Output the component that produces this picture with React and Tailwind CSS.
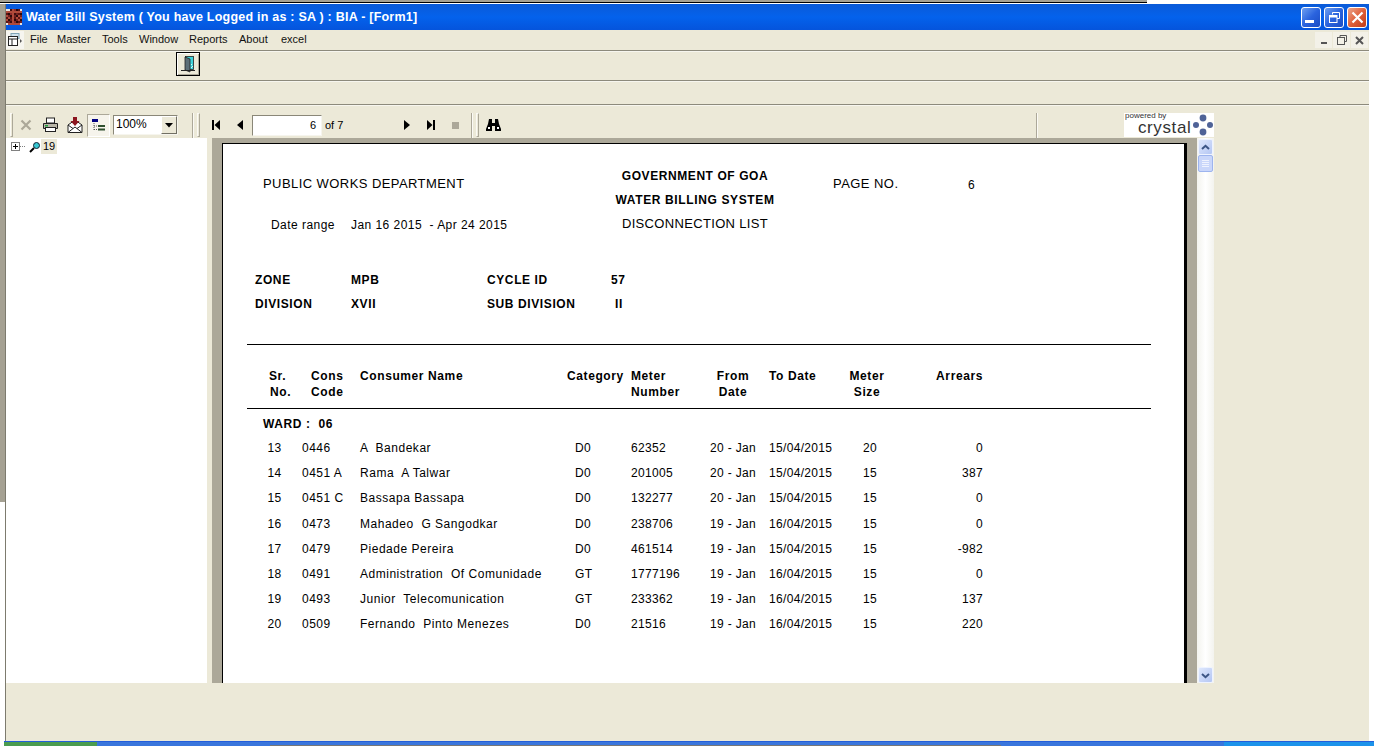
import React from "react";

const rows = [
  ["13", "0446", "A  Bandekar", "D0", "62352", "20 - Jan", "15/04/2015", "20", "0"],
  ["14", "0451 A", "Rama  A Talwar", "D0", "201005", "20 - Jan", "15/04/2015", "15", "387"],
  ["15", "0451 C", "Bassapa Bassapa", "D0", "132277", "20 - Jan", "15/04/2015", "15", "0"],
  ["16", "0473", "Mahadeo  G Sangodkar", "D0", "238706", "19 - Jan", "16/04/2015", "15", "0"],
  ["17", "0479", "Piedade Pereira", "D0", "461514", "19 - Jan", "15/04/2015", "15", "-982"],
  ["18", "0491", "Administration  Of Comunidade", "GT", "1777196", "19 - Jan", "16/04/2015", "15", "0"],
  ["19", "0493", "Junior  Telecomunication", "GT", "233362", "19 - Jan", "16/04/2015", "15", "137"],
  ["20", "0509", "Fernando  Pinto Menezes", "D0", "21516", "19 - Jan", "16/04/2015", "15", "220"],
];

const gridCols = "grid grid-cols-[55px_58px_207px_64px_66px_72px_80px_36px_98px]";

function Divider() {
  return (
    <div className="w-full">
      <div className="h-px bg-[#8d8a7c]" />
      <div className="h-px bg-[#f7f6ef]" />
    </div>
  );
}

function Grip() {
  return <div className="h-[24px] w-[3px] border-l border-t border-b border-r border-l-[#fbfaf5] border-t-[#fbfaf5] border-r-[#aca899] border-b-[#aca899]" />;
}

function VLine() {
  return <div className="h-[25px] w-[2px] border-l border-r border-l-[#aca899] border-r-[#fbfaf5]" />;
}

function Slot({ w, children }) {
  const cls = { 25: "w-[25px]", 24: "w-[24px]" }[w];
  return <div className={`${cls} h-full flex items-center justify-center`}>{children}</div>;
}

function Nav({ d }) {
  return (
    <svg width="12" height="12" viewBox="0 0 12 12">
      <path d={d} fill="#000" />
    </svg>
  );
}

function AppIcon() {
  const cells = [];
  const pal = ["#5c1414", "#2a0a0a", "#8c2a2a", "#b04a3a", "#401010", "#702020"];
  for (let y = 0; y < 8; y++) {
    for (let x = 0; x < 8; x++) {
      const cut = (y === 0 && (x < 2 || x > 6)) || (y === 7 && (x === 0 || x === 7));
      if (cut) continue;
      cells.push(<rect key={`${x}-${y}`} x={x * 2} y={y * 2} width="2" height="2" fill={pal[(x * 5 + y * 3 + x * y) % 6]} />);
    }
  }
  return (
    <svg width="16" height="16" viewBox="0 0 16 16" className="bg-[#e8e4e0] shrink-0">
      {cells}
    </svg>
  );
}

function WinBtn({ children, red }) {
  return (
    <div
      className={`w-[20px] h-[21px] rounded-[3px] border border-white flex items-center justify-center ${
        red ? "bg-gradient-to-br from-[#e9a48b] via-[#e0603a] to-[#c03a18]" : "bg-gradient-to-br from-[#6f9ff0] via-[#2a63de] to-[#1b4cc4]"
      }`}
    >
      {children}
    </div>
  );
}

function MdiBtn({ children }) {
  return <div className="w-[17px] h-[16px] bg-[#f3f1e8] flex items-center justify-center">{children}</div>;
}

function ScrollBtn({ up }) {
  return (
    <div className="w-[15px] h-[16px] mx-auto rounded-[2px] border border-[#eef3ff] bg-gradient-to-br from-[#dfe8fd] to-[#b4c6f3] flex items-center justify-center">
      <svg width="9" height="7" viewBox="0 0 9 7">
        <path d={up ? "M1 5 L4.5 1.8 L8 5" : "M1 2 L4.5 5.2 L8 2"} stroke="#3c5585" strokeWidth="2" fill="none" />
      </svg>
    </div>
  );
}

export default function App() {
  return (
    <div className="w-[1374px] h-[746px] overflow-hidden bg-white flex flex-col font-['Liberation_Sans',Arial,sans-serif] text-black">
      {/* strip above the window */}
      <div className="h-[4px] shrink-0 flex">
        <div className="w-[1147px] h-[3px] bg-[#a5a193] border-b border-black" />
      </div>

      <div className="flex-1 flex min-h-0">
        <div className="w-[5px] h-[498px] bg-[#a5a193] shrink-0" />

        {/* window */}
        <div className="w-[1364px] shrink-0 flex flex-col bg-[#ece9d8] border-l border-[#7d7b6e]">
          {/* title bar */}
          <div className="h-[26px] shrink-0 flex items-center pr-[2px] bg-gradient-to-b from-[#0a5ad8] via-[#0462ec] to-[#0554dc]">
            <AppIcon />
            <span className="ml-[4px] text-[12.5px] font-bold text-white tracking-[0.23px] whitespace-pre">
              Water Bill System ( You have Logged in as : SA ) : BIA - [Form1]
            </span>
            <div className="ml-auto flex gap-[3px]">
              <WinBtn>
                <div className="w-[9px] h-[3px] bg-white mt-[9px] mr-[3px]" />
              </WinBtn>
              <WinBtn>
                <svg width="13" height="13" viewBox="0 0 13 13" fill="none" stroke="#fff">
                  <path d="M4.5 3.5V1.5H11.5V7.5H9" />
                  <rect x="1.5" y="4.5" width="7.5" height="7" />
                  <path d="M1.5 5.5H9" strokeWidth="2" />
                </svg>
              </WinBtn>
              <WinBtn red>
                <svg width="13" height="13" viewBox="0 0 13 13">
                  <path d="M1.5 1.5L11.5 11.5M11.5 1.5L1.5 11.5" stroke="#fff" strokeWidth="2.2" />
                </svg>
              </WinBtn>
            </div>
          </div>

          {/* menu bar */}
          <div className="h-[20px] shrink-0 flex items-center text-[11px] pr-[1px]">
            <div className="w-[18px] h-[18px] bg-[#f6f5ef] flex items-center justify-center shrink-0">
              <svg width="16" height="14" viewBox="0 0 16 14">
                <rect x="4" y="0.5" width="8" height="5" fill="#cfe3ee" stroke="#7fa3b5" />
                <rect x="1.5" y="3.5" width="9" height="9" fill="#fff" stroke="#222" />
                <path d="M1.5 6H10.5M5 6V12.5" stroke="#222" />
                <path d="M13 6l2 2-2 2z" fill="#555" />
              </svg>
            </div>
            <div className="flex ml-[6px] -mt-[2px] whitespace-pre text-[#111]">
              <span className="w-[27px]">File</span>
              <span className="w-[45px]">Master</span>
              <span className="w-[37px]">Tools</span>
              <span className="w-[50px]">Window</span>
              <span className="w-[50px]">Reports</span>
              <span className="w-[42px]">About</span>
              <span>excel</span>
            </div>
            <div className="ml-auto flex gap-[1px]">
              <MdiBtn>
                <div className="w-[6px] h-[2px] bg-[#555] mt-[6px]" />
              </MdiBtn>
              <MdiBtn>
                <svg width="10" height="10" viewBox="0 0 10 10" fill="none" stroke="#555">
                  <path d="M3 2.5V.5H9.5V6.5H7.5" />
                  <rect x=".5" y="2.5" width="7" height="7" />
                </svg>
              </MdiBtn>
              <MdiBtn>
                <svg width="9" height="9" viewBox="0 0 9 9">
                  <path d="M1 1L8 8M8 1L1 8" stroke="#555" strokeWidth="2" />
                </svg>
              </MdiBtn>
            </div>
          </div>

          <Divider />

          {/* toolbar 1 */}
          <div className="h-[28px] shrink-0 flex items-start pl-[170px]">
            <div className="w-[24px] h-[24px] border border-black bg-[#ece9d8] shadow-[inset_1px_1px_0_#fff,inset_-1px_-1px_0_#aca899] flex items-center justify-center">
              <svg width="18" height="18" viewBox="0 0 18 18">
                <rect x="6.5" y="1.5" width="8" height="13" fill="#3fd4dc" stroke="#222" strokeWidth="0.8" />
                <path d="M6 2L11 4V17L6 15Z" fill="#5d6f78" stroke="#222" strokeWidth="0.8" />
                <path d="M2 15.5H16" stroke="#222" />
                <path d="M12 9h1v1h-1zM13 11h1v1h-1zM12 12h1v1h-1z" fill="#d8fbfb" />
              </svg>
            </div>
          </div>

          <Divider />

          <div className="h-[22px] shrink-0" />

          <Divider />

          {/* viewer toolbar */}
          <div className="h-[32px] shrink-0 flex items-center pt-[6px] text-[11px]">
            <div className="ml-[4px]">
              <Grip />
            </div>
            <Slot w={25}>
              <svg width="12" height="12" viewBox="0 0 12 12">
                <path d="M1.5 1.5L10.5 10.5M10.5 1.5L1.5 10.5" stroke="#aca899" strokeWidth="2.2" />
              </svg>
            </Slot>
            <Slot w={25}>
              <svg width="17" height="16" viewBox="0 0 17 16">
                <rect x="4.5" y="1" width="8" height="5" fill="#fff" stroke="#222" />
                <path d="M1.5 6.5H15.5V11.5H1.5Z" fill="#b9b6a8" stroke="#222" />
                <rect x="3.5" y="10.5" width="10" height="4" fill="#fff" stroke="#222" />
                <rect x="3" y="8" width="3" height="1.5" fill="#20a040" />
              </svg>
            </Slot>
            <Slot w={24}>
              <svg width="16" height="17" viewBox="0 0 16 17">
                <path d="M1 8L8 3L15 8V15.5H1Z" fill="#fff" stroke="#222" />
                <path d="M1 15.5L8 10L15 15.5M1 8L6 11.5M15 8L10 11.5" fill="none" stroke="#222" />
                <path d="M6 0H10V4H12.5L8 9L3.5 4H6Z" fill="#8c1620" />
              </svg>
            </Slot>
            <div className="w-[23px] h-[23px] bg-[#f6f4ec] border border-l-[#aca899] border-t-[#aca899] border-r-white border-b-white flex items-center justify-center">
              <svg width="14" height="13" viewBox="0 0 14 13">
                <rect x="0" y="0" width="6" height="3" fill="#000080" />
                <path d="M2 4V12M2 7H5M2 10.5H5" stroke="#555" strokeDasharray="1 1" />
                <rect x="6" y="6" width="7" height="2" fill="#2f4f2f" />
                <rect x="6" y="9.5" width="7" height="2" fill="#2f4f2f" />
              </svg>
            </div>
            <div className="ml-[3px] w-[65px] h-[20px] bg-white border border-l-[#8a8778] border-t-[#8a8778] border-r-[#f6f5ee] border-b-[#f6f5ee] flex">
              <span className="pl-[2px] text-[12px] leading-[17px]">100%</span>
              <div className="ml-auto w-[16px] h-full bg-[#ece9d8] border border-r-[#716f64] border-b-[#716f64] border-l-white border-t-white flex items-center justify-center">
                <svg width="8" height="5" viewBox="0 0 8 5">
                  <path d="M0 0H8L4 4.5Z" fill="#000" />
                </svg>
              </div>
            </div>
            <div className="ml-[14px]">
              <VLine />
            </div>
            <div className="ml-[3px]">
              <Grip />
            </div>
            <div className="ml-[4px] flex h-full">
              <Slot w={24}>
                <Nav d="M2 1H4V11H2ZM10 1V11L4.5 6Z" />
              </Slot>
              <Slot w={24}>
                <Nav d="M9 1V11L3 6Z" />
              </Slot>
            </div>
            <div className="w-[70px] h-[21px] bg-white border border-l-[#8a8778] border-t-[#8a8778] border-r-[#f6f5ee] border-b-[#f6f5ee] flex items-center justify-end pr-[5px] text-[11px]">
              6
            </div>
            <span className="ml-[3px] w-[70px] text-[11px]">of 7</span>
            <div className="flex h-full">
              <Slot w={24}>
                <Nav d="M3 1V11L9 6Z" />
              </Slot>
              <Slot w={24}>
                <Nav d="M2 1L7.5 6L2 11ZM8 1H10V11H8Z" />
              </Slot>
              <Slot w={24}>
                <div className="w-[7px] h-[7px] bg-[#aca899]" />
              </Slot>
            </div>
            <div className="ml-[4px]">
              <VLine />
            </div>
            <div className="ml-[3px]">
              <Grip />
            </div>
            <div className="ml-[2px] h-full">
              <Slot w={24}>
                <svg width="15" height="14" viewBox="0 0 15 14">
                  <path d="M3 1H6V5H9V1H12L13 6L15 11V13H9V8H6V13H0V11L2 6Z" fill="#000" />
                  <rect x="2" y="9" width="2" height="2" fill="#fff" />
                  <rect x="11" y="9" width="2" height="2" fill="#fff" />
                </svg>
              </Slot>
            </div>
            <div className="ml-[531px]">
              <VLine />
            </div>
            <div className="ml-[86px] w-[90px] h-[24px] bg-white relative shrink-0">
              <span className="absolute left-[1px] top-0 text-[8px] leading-[6px] text-[#333]">powered by</span>
              <span className="absolute left-[14px] top-[7px] text-[17px] leading-[15px] tracking-[0.6px] text-[#333]">crystal</span>
              <svg width="22" height="22" viewBox="0 0 22 22" className="absolute right-0 top-[1px]">
                <circle cx="11" cy="4" r="3.4" fill="#4f6397" />
                <circle cx="4" cy="11" r="3" fill="#4f6397" />
                <circle cx="18" cy="11" r="3" fill="#4f6397" />
                <circle cx="11" cy="18" r="3.4" fill="#4f6397" />
              </svg>
            </div>
          </div>

          {/* viewer body */}
          <div className="h-[545px] shrink-0 flex">
            {/* tree */}
            <div className="w-[201px] shrink-0 bg-white pl-[5px] pt-[1px]">
              <div className="h-[15px] flex items-center">
                <div className="w-[9px] h-[9px] border border-[#808080] flex items-center justify-center">
                  <svg width="7" height="7" viewBox="0 0 7 7">
                    <path d="M1 3.5H6M3.5 1V6" stroke="#000" />
                  </svg>
                </div>
                <div className="w-[5px] border-t border-dotted border-[#808080]" />
                <svg width="12" height="12" viewBox="0 0 12 12" className="ml-[4px]">
                  <circle cx="7.5" cy="4.5" r="3" fill="#35c6d0" stroke="#123" />
                  <path d="M5 7L1 11" stroke="#000" strokeWidth="2" />
                </svg>
                <span className="w-[16px] h-[15px] bg-[#ece9d8] text-[11px] leading-[15px] text-center">19</span>
              </div>
            </div>

            <div className="w-[5px] shrink-0" />

            {/* page area */}
            <div className="w-[985px] shrink-0 bg-[#aca899] pl-[10px] pt-[5px] overflow-hidden">
              <div className="w-[965px] h-[560px] bg-white border-l border-t border-black border-r-[3px] text-[12px] tracking-[0.33px] whitespace-pre">
                {/* heading */}
                <div className="h-[73px] pt-[20px] grid grid-cols-[392px_220px_135px_auto]">
                  <div className="pl-[40px] pt-[13px] flex flex-col">
                    <span className="h-[39px] text-[13px] leading-[14px] tracking-[0.43px]">PUBLIC WORKS DEPARTMENT</span>
                    <div className="pl-[8px] flex tracking-[0.45px]">
                      <span className="w-[80px]">Date range</span>
                      <span>Jan 16 2015  - Apr 24 2015</span>
                    </div>
                  </div>
                  <div className="flex flex-col items-start leading-[24px]">
                    <span className="w-[160px] text-center font-bold tracking-[0.57px]">GOVERNMENT OF GOA</span>
                    <span className="w-[160px] text-center font-bold tracking-[0.63px]">WATER BILLING SYSTEM</span>
                    <span className="w-[160px] text-center text-[13px]">DISCONNECTION LIST</span>
                  </div>
                  <div className="pt-[13px] -ml-[2px] text-[13px] leading-[14px] tracking-[0.45px]">PAGE NO.</div>
                  <div className="pt-[12px] -ml-[2px] w-[8px]">6</div>
                </div>

                {/* zone block */}
                <div className="mt-[51px] pl-[32px] font-bold tracking-[0.6px] grid grid-cols-[96px_136px_124px_auto] leading-[24px]">
                  <span>ZONE</span>
                  <span>MPB</span>
                  <span>CYCLE ID</span>
                  <span>57</span>
                  <span>DIVISION</span>
                  <span>XVII</span>
                  <span>SUB DIVISION</span>
                  <span className="pl-[4px]">II</span>
                </div>

                {/* table */}
                <div className="mt-[28px] ml-[24px] w-[904px]">
                  <div className="h-px bg-black" />
                  <div className={`${gridCols} pt-[23px] h-[63px] font-bold tracking-[0.6px] leading-[16px]`}>
                    <div className="pl-[22px] flex flex-col">
                      <span>Sr.</span>
                      <span className="pl-[1px]">No.</span>
                    </div>
                    <div className="pl-[9px] flex flex-col">
                      <span>Cons</span>
                      <span>Code</span>
                    </div>
                    <div>Consumer Name</div>
                    <div>Category</div>
                    <div className="flex flex-col">
                      <span>Meter</span>
                      <span>Number</span>
                    </div>
                    <div className="flex flex-col text-center">
                      <span>From</span>
                      <span>Date</span>
                    </div>
                    <div>To Date</div>
                    <div className="flex flex-col text-center">
                      <span>Meter</span>
                      <span>Size</span>
                    </div>
                    <div className="text-right">Arrears</div>
                  </div>
                  <div className="h-px bg-black" />
                  <div className="pl-[16px] h-[28px] pt-[8px] font-bold tracking-[0.6px] leading-[15px]">WARD :  06</div>
                  {rows.map((r) => (
                    <div key={r[0]} className={`${gridCols} h-[25.2px] leading-[22px]`}>
                      <div className="text-center">{r[0]}</div>
                      <div className="tracking-[0.5px]">{r[1]}</div>
                      <div className="tracking-[0.52px]">{r[2]}</div>
                      <div className="pl-[8px]">{r[3]}</div>
                      <div>{r[4]}</div>
                      <div className="pl-[13px]">{r[5]}</div>
                      <div>{r[6]}</div>
                      <div className="pl-[14px]">{r[7]}</div>
                      <div className="text-right">{r[8]}</div>
                    </div>
                  ))}
                </div>
              </div>
            </div>

            {/* scrollbar */}
            <div className="w-[17px] shrink-0 bg-gradient-to-r from-[#f3f3ee] via-white to-[#f3f3ee] flex flex-col pt-[1px]">
              <ScrollBtn up />
              <div className="w-[15px] h-[17px] mx-auto rounded-[2px] border border-[#9db4ee] bg-[#c9d6fa] flex flex-col items-center justify-center gap-[1px]">
                <div className="w-[7px] h-px bg-[#eef2fe]" />
                <div className="w-[7px] h-px bg-[#eef2fe]" />
                <div className="w-[7px] h-px bg-[#eef2fe]" />
                <div className="w-[7px] h-px bg-[#eef2fe]" />
              </div>
              <div className="flex-1" />
              <ScrollBtn />
            </div>
          </div>

          <div className="flex-1" />
        </div>
      </div>

      {/* taskbar sliver */}
      <div className="h-[5px] shrink-0 flex flex-col">
        <div className="h-[1px] bg-[#245edb] ml-[4px]" />
        <div className="flex-1 flex ml-[4px]">
          <div className="w-[93px] bg-[#4b9c50]" />
          <div className="w-[1127px] bg-[#3a76dc] flex flex-col justify-end">
            <div className="h-px ml-[173px] mr-[223px] bg-[#777777]" />
          </div>
          <div className="flex-1 bg-[#1c93ea]" />
        </div>
      </div>
    </div>
  );
}
